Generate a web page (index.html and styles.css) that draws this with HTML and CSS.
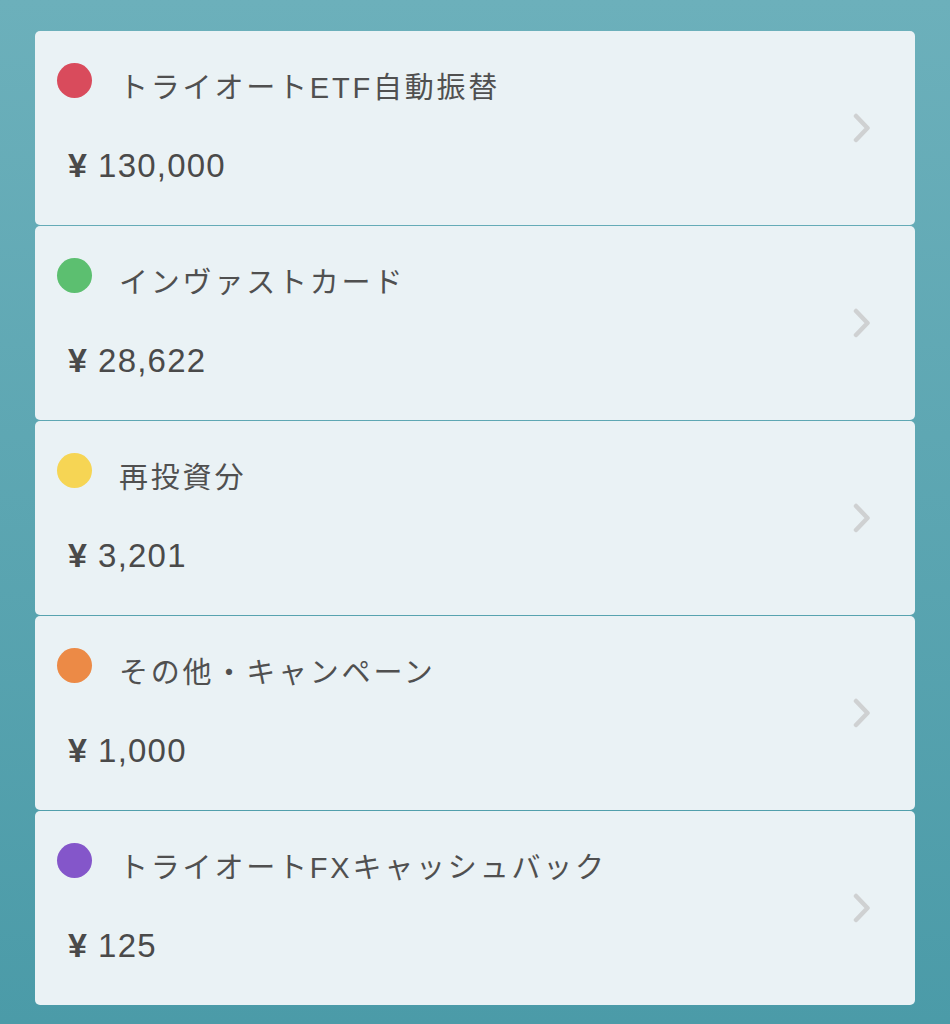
FILE: index.html
```html
<!DOCTYPE html>
<html lang="ja">
<head>
<meta charset="utf-8">
<link rel="stylesheet" href="styles.css">
</head>
<body>
<div class="list">
  <div class="card">
    <div class="info">
      <div class="head"><span class="dot red"></span><span class="title">トライオートETF自動振替</span></div>
      <div class="amount"><span class="yen">¥</span>130,000</div>
    </div>
    <svg class="chev" viewBox="0 0 18 30" width="18" height="30"><path d="M3 3 L14.5 15 L3 27" fill="none" stroke="#cfd1d2" stroke-width="4.5" stroke-linecap="round" stroke-linejoin="round"/></svg>
  </div>
  <div class="card">
    <div class="info">
      <div class="head"><span class="dot green"></span><span class="title">インヴァストカード</span></div>
      <div class="amount"><span class="yen">¥</span>28,622</div>
    </div>
    <svg class="chev" viewBox="0 0 18 30" width="18" height="30"><path d="M3 3 L14.5 15 L3 27" fill="none" stroke="#cfd1d2" stroke-width="4.5" stroke-linecap="round" stroke-linejoin="round"/></svg>
  </div>
  <div class="card">
    <div class="info">
      <div class="head"><span class="dot yellow"></span><span class="title">再投資分</span></div>
      <div class="amount"><span class="yen">¥</span>3,201</div>
    </div>
    <svg class="chev" viewBox="0 0 18 30" width="18" height="30"><path d="M3 3 L14.5 15 L3 27" fill="none" stroke="#cfd1d2" stroke-width="4.5" stroke-linecap="round" stroke-linejoin="round"/></svg>
  </div>
  <div class="card">
    <div class="info">
      <div class="head"><span class="dot orange"></span><span class="title">その他・キャンペーン</span></div>
      <div class="amount"><span class="yen">¥</span>1,000</div>
    </div>
    <svg class="chev" viewBox="0 0 18 30" width="18" height="30"><path d="M3 3 L14.5 15 L3 27" fill="none" stroke="#cfd1d2" stroke-width="4.5" stroke-linecap="round" stroke-linejoin="round"/></svg>
  </div>
  <div class="card">
    <div class="info">
      <div class="head"><span class="dot purple"></span><span class="title">トライオートFXキャッシュバック</span></div>
      <div class="amount"><span class="yen">¥</span>125</div>
    </div>
    <svg class="chev" viewBox="0 0 18 30" width="18" height="30"><path d="M3 3 L14.5 15 L3 27" fill="none" stroke="#cfd1d2" stroke-width="4.5" stroke-linecap="round" stroke-linejoin="round"/></svg>
  </div>
</div>
</body>
</html>
```

FILE: styles.css
```css
html, body {
  margin: 0;
  padding: 0;
}
body {
  width: 950px;
  height: 1024px;
  overflow: hidden;
  background: linear-gradient(to bottom, #6cb0bb 0%, #4b9ba8 100%);
  font-family: "Noto Sans CJK JP", "Noto Sans", sans-serif;
  color: #4a4a4a;
}
.list {
  display: flex;
  flex-direction: column;
  gap: 1px;
  padding: 31px 35px 0 35px;
}
.card {
  height: 194px;
  box-sizing: border-box;
  background: #eaf2f5;
  border-radius: 5px;
  display: flex;
  align-items: center;
  justify-content: space-between;
  padding: 0 44px 0 22px;
}
.info {
  display: flex;
  flex-direction: column;
  gap: 48px;
  margin-top: -7px;
}
.head {
  display: flex;
  align-items: flex-start;
  gap: 27px;
  height: 34px;
}
.dot {
  width: 35px;
  height: 35px;
  border-radius: 50%;
  flex: none;
}
.red { background: #d94b5c; }
.green { background: #5cbf70; }
.yellow { background: #f6d554; }
.orange { background: #ec8a46; }
.purple { background: #8456ca; }
.title {
  font-family: "Liberation Sans", "Noto Sans CJK JP", sans-serif;
  font-size: 29px;
  line-height: 34px;
  letter-spacing: 2.8px;
  padding-top: 8px;
  color: #505050;
}
.amount {
  font-family: "Liberation Sans", Arial, sans-serif;
  font-size: 33px;
  line-height: 40px;
  letter-spacing: 1.2px;
  padding-left: 11px;
  color: #4a4a4a;
}
.yen {
  font-weight: bold;
  font-size: 34px;
  margin-right: 10px;
}
.chev {
  flex: none;
  display: block;
}
```
